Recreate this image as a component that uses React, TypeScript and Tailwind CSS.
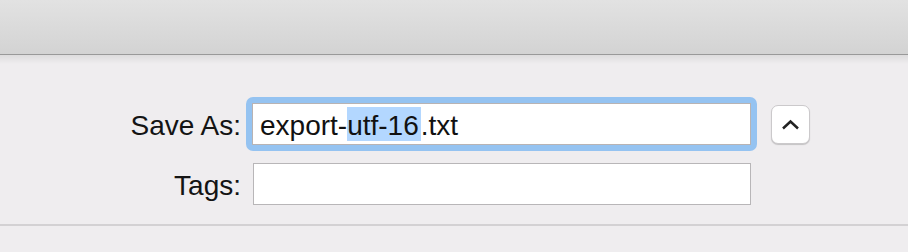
import React from "react";

export default function App() {
  const font = { fontFamily: '"Liberation Sans", Arial, sans-serif' };
  return (
    <div className="w-[908px] h-[252px] overflow-hidden bg-[#efedef]" style={font}>
      {/* title bar */}
      <div className="h-[55px] bg-[linear-gradient(to_bottom,#e2e2e2,#d3d3d3)] border-b border-[#999999]" />
      <div className="h-[197px] bg-[linear-gradient(to_bottom,#dddcdd,#efedef_9px)] flex flex-col">
        <div className="pt-[42px] flex flex-col">
          {/* row 1 */}
          <div className="flex items-center h-[54px]">
            <div className="w-[241px] text-right text-[28px] text-[#141414] leading-none pt-[4px]">Save As:</div>
            <div className="ml-[5px] p-[6px] rounded-[7px] bg-[#95c3f1]">
              <div className="w-[499px] h-[42px] bg-white border border-[#b8b3b3] flex items-center pl-[7px] text-[28px] text-[#111111] leading-none whitespace-nowrap">
                <span className="pt-[3px]">export-</span>
                <span className="inline-flex items-center pt-[3px] pr-[2px] h-[34px] bg-[#b3d7ff]">utf-16</span>
                <span className="pt-[3px]">.txt</span>
              </div>
            </div>
            <div className="ml-[14px] w-[39px] h-[39px] rounded-[7px] bg-white border border-[#cbc9cb] shadow-[0_1px_1px_rgba(0,0,0,0.18)] flex items-center justify-center">
              <svg width="19" height="11" viewBox="0 0 19 11" fill="none" className="mt-[1px]">
                <path d="M2 9.5 L9.5 2.5 L17 9.5" stroke="#222222" strokeWidth="2.5" strokeLinejoin="miter" />
              </svg>
            </div>
          </div>
          {/* row 2 */}
          <div className="flex items-center h-[42px] mt-[12px]">
            <div className="w-[241px] text-right text-[28px] text-[#141414] leading-none pt-[4px]">Tags:</div>
            <div className="ml-[12px] w-[498px] h-[42px] bg-white border border-[#b8b6b8]" />
          </div>
        </div>
        <div className="mt-[19px] h-[2px] bg-[#d3d1d3]" />
      </div>
    </div>
  );
}
